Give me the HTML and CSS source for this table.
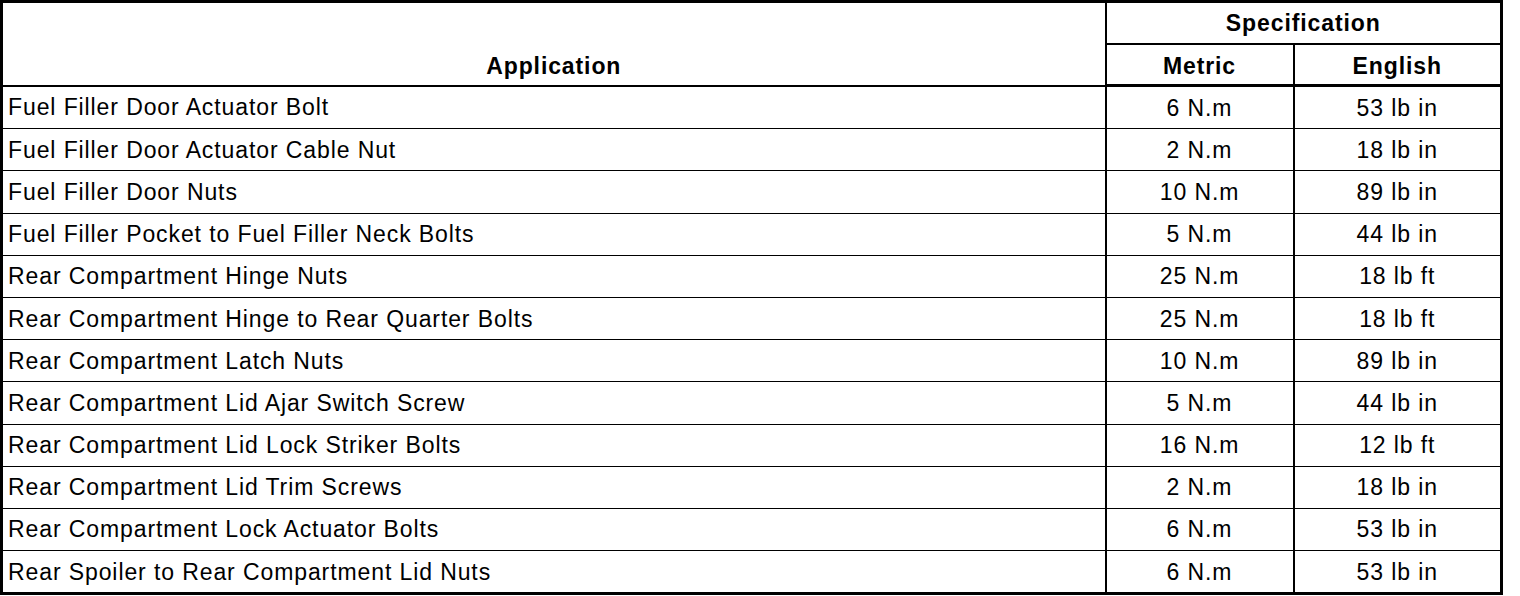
FILE: index.html
```html
<!DOCTYPE html>
<html>
<head>
<meta charset="utf-8">
<link rel="stylesheet" href="styles.css">
</head>
<body>
<table class="spec">
  <colgroup>
    <col class="c-app">
    <col class="c-met">
    <col class="c-eng">
  </colgroup>
  <thead>
    <tr class="h1">
      <th rowspan="2" class="app-head">Application</th>
      <th colspan="2">Specification</th>
    </tr>
    <tr class="h2">
      <th>Metric</th>
      <th>English</th>
    </tr>
  </thead>
  <tbody>
    <tr><td>Fuel Filler Door Actuator Bolt</td><td>6 N.m</td><td>53 lb in</td></tr>
    <tr><td>Fuel Filler Door Actuator Cable Nut</td><td>2 N.m</td><td>18 lb in</td></tr>
    <tr><td>Fuel Filler Door Nuts</td><td>10 N.m</td><td>89 lb in</td></tr>
    <tr><td>Fuel Filler Pocket to Fuel Filler Neck Bolts</td><td>5 N.m</td><td>44 lb in</td></tr>
    <tr><td>Rear Compartment Hinge Nuts</td><td>25 N.m</td><td>18 lb ft</td></tr>
    <tr><td>Rear Compartment Hinge to Rear Quarter Bolts</td><td>25 N.m</td><td>18 lb ft</td></tr>
    <tr><td>Rear Compartment Latch Nuts</td><td>10 N.m</td><td>89 lb in</td></tr>
    <tr><td>Rear Compartment Lid Ajar Switch Screw</td><td>5 N.m</td><td>44 lb in</td></tr>
    <tr><td>Rear Compartment Lid Lock Striker Bolts</td><td>16 N.m</td><td>12 lb ft</td></tr>
    <tr><td>Rear Compartment Lid Trim Screws</td><td>2 N.m</td><td>18 lb in</td></tr>
    <tr><td>Rear Compartment Lock Actuator Bolts</td><td>6 N.m</td><td>53 lb in</td></tr>
    <tr><td>Rear Spoiler to Rear Compartment Lid Nuts</td><td>6 N.m</td><td>53 lb in</td></tr>
  </tbody>
</table>
</body>
</html>
```

FILE: styles.css
```css
html, body {
  margin: 0;
  padding: 0;
  background: #fff;
}
body {
  font-family: "Liberation Sans", Arial, sans-serif;
  color: #000;
}
.spec {
  border-collapse: collapse;
  table-layout: fixed;
  width: 1503px;
  border: 3px solid #000;
  font-size: 23px;
  letter-spacing: 0.9px;
}
.c-app { width: 1104px; }
.c-met { width: 188px; }
.c-eng { width: 208px; }
.spec th, .spec td {
  border: 2px solid #000;
  padding: 0;
  text-align: center;
  vertical-align: middle;
  white-space: nowrap;
}
.spec th {
  font-weight: bold;
}
.spec .h1 th {
  height: 40px;
}
.spec .h2 th {
  height: 36px;
  padding-top: 3px;
  border-bottom-width: 3px;
}
.spec .app-head {
  vertical-align: bottom;
  padding-bottom: 5px;
}
.spec tbody td {
  height: 40.2px;
  padding-top: 1px;
  border-top-width: 1px;
  border-bottom-width: 1px;
}
.spec td:first-child {
  text-align: left;
  padding-left: 5px;
}
```
